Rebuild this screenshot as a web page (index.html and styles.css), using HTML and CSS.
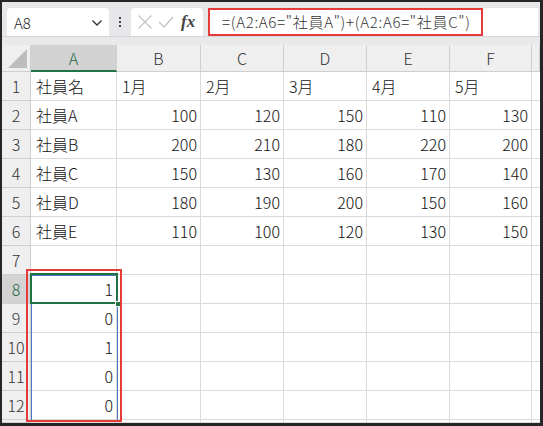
FILE: index.html
```html
<!DOCTYPE html>
<html lang="ja">
<head>
<meta charset="utf-8">
<link rel="stylesheet" href="styles.css">
</head>
<body>
<div class="frame">
  <div class="app">
    <div class="toolbar">
      <div class="namebox">
        <span class="ref">A8</span>
        <svg class="chev" width="12" height="8" viewBox="0 0 12 8"><polyline points="1.5,1.5 6,6 10.5,1.5" fill="none" stroke="#333" stroke-width="1.4"/></svg>
      </div>
      <div class="vdots"><i></i><i></i><i></i></div>
      <div class="fxbox">
        <svg width="16" height="16" viewBox="0 0 16 16"><path d="M1.5 1.5 L14.5 14.5 M14.5 1.5 L1.5 14.5" stroke="#c4c4c4" stroke-width="1.3" fill="none"/></svg>
        <svg width="18" height="16" viewBox="0 0 18 16"><polyline points="2,8 7,13 16,3" stroke="#c4c4c4" stroke-width="1.3" fill="none"/></svg>
        <span class="fx">fx</span>
      </div>
      <div class="formula">=(A2:A6="社員A")+(A2:A6="社員C")</div>
      <div class="mark mark-formula"></div>
    </div>
    <div class="sep"></div>
    <div class="sheet">
      <div class="hd corner"><span class="tri"></span></div>
      <div class="hd col sel">A</div>
      <div class="hd col">B</div>
      <div class="hd col">C</div>
      <div class="hd col">D</div>
      <div class="hd col">E</div>
      <div class="hd col">F</div>
      <div class="hd col"></div>

      <div class="hd row">1</div><div class="c">社員名</div><div class="c">1月</div><div class="c">2月</div><div class="c">3月</div><div class="c">4月</div><div class="c">5月</div><div class="c"></div>
      <div class="hd row">2</div><div class="c">社員A</div><div class="c n">100</div><div class="c n">120</div><div class="c n">150</div><div class="c n">110</div><div class="c n">130</div><div class="c"></div>
      <div class="hd row">3</div><div class="c">社員B</div><div class="c n">200</div><div class="c n">210</div><div class="c n">180</div><div class="c n">220</div><div class="c n">200</div><div class="c"></div>
      <div class="hd row">4</div><div class="c">社員C</div><div class="c n">150</div><div class="c n">130</div><div class="c n">160</div><div class="c n">170</div><div class="c n">140</div><div class="c"></div>
      <div class="hd row">5</div><div class="c">社員D</div><div class="c n">180</div><div class="c n">190</div><div class="c n">200</div><div class="c n">150</div><div class="c n">160</div><div class="c"></div>
      <div class="hd row">6</div><div class="c">社員E</div><div class="c n">110</div><div class="c n">100</div><div class="c n">120</div><div class="c n">130</div><div class="c n">150</div><div class="c"></div>
      <div class="hd row">7</div><div class="c"></div><div class="c"></div><div class="c"></div><div class="c"></div><div class="c"></div><div class="c"></div><div class="c"></div>
      <div class="hd row sel">8</div><div class="c n">1</div><div class="c"></div><div class="c"></div><div class="c"></div><div class="c"></div><div class="c"></div><div class="c"></div>
      <div class="hd row">9</div><div class="c n">0</div><div class="c"></div><div class="c"></div><div class="c"></div><div class="c"></div><div class="c"></div><div class="c"></div>
      <div class="hd row">10</div><div class="c n">1</div><div class="c"></div><div class="c"></div><div class="c"></div><div class="c"></div><div class="c"></div><div class="c"></div>
      <div class="hd row">11</div><div class="c n">0</div><div class="c"></div><div class="c"></div><div class="c"></div><div class="c"></div><div class="c"></div><div class="c"></div>
      <div class="hd row">12</div><div class="c n">0</div><div class="c"></div><div class="c"></div><div class="c"></div><div class="c"></div><div class="c"></div><div class="c"></div>
      <div class="hd row"></div><div class="c"></div><div class="c"></div><div class="c"></div><div class="c"></div><div class="c"></div><div class="c"></div><div class="c"></div>

      <div class="spill"></div>
      <div class="active"><span class="handle"></span></div>
      <div class="mark mark-range"></div>
    </div>
  </div>
</div>
</body>
</html>
```

FILE: styles.css
```css
* { box-sizing: border-box; }
html, body { margin: 0; padding: 0; }
body {
  width: 543px;
  height: 426px;
  overflow: hidden;
  font-family: "Noto Sans CJK JP", "Noto Sans", sans-serif;
  font-weight: 300;
}
.frame {
  width: 543px;
  height: 426px;
  background: #262626;
  padding: 2px 3px 3px 2px;
}
.app {
  width: 538px;
  height: 421px;
  background: #ffffff;
  overflow: hidden;
  display: flex;
  flex-direction: column;
}
.toolbar {
  position: relative;
  height: 34px;
  flex: none;
  background: #e7e7ea;
  display: flex;
  align-items: flex-end;
  padding-left: 5px;
}
.namebox {
  width: 102px;
  height: 28px;
  background: #fff;
  border-radius: 4px 4px 0 0;
  display: flex;
  align-items: center;
  justify-content: space-between;
  padding: 0 6px 0 7px;
  font-size: 15px;
  color: #222;
}
.chev { margin-top: 1px; }
.vdots {
  width: 22px;
  height: 28px;
  display: flex;
  flex-direction: column;
  align-items: center;
  justify-content: center;
  gap: 2px;
}
.vdots i {
  display: block;
  width: 2px;
  height: 2px;
  background: #444;
}
.fxbox {
  width: 72px;
  height: 28px;
  background: #fff;
  border-radius: 4px 4px 0 0;
  display: flex;
  align-items: center;
  padding-left: 6px;
  gap: 4px;
}
.fx {
  font-family: "Liberation Serif", "DejaVu Serif", serif;
  font-style: italic;
  font-weight: 700;
  font-size: 17px;
  color: #444;
  margin-left: 2px;
}
.formula {
  margin-left: 5px;
  width: 330px;
  height: 28px;
  background: #fff;
  padding-left: 14px;
  font-size: 15px;
  letter-spacing: 0.7px;
  line-height: 28px;
  color: #333;
  white-space: nowrap;
}
.sep {
  height: 9px;
  flex: none;
  background: #e9e9ec;
  border-top: 1px solid #d6d6da;
}
.sheet {
  position: relative;
  display: grid;
  grid-template-columns: 29px 86px 84px 83px 83px 83px 82px 8px;
  grid-template-rows: 27px repeat(12, 29px) 3px;
  font-size: 16px;
  color: #111;
}
.hd {
  background: #efefef;
  border-right: 1px solid #cfcfcf;
  border-bottom: 1px solid #cfcfcf;
  display: flex;
  align-items: center;
  justify-content: center;
  color: #333;
  font-size: 16px;
}
.hd.sel {
  background: #d3d3d3;
  color: #1d6b41;
}
.hd.col.sel {
  border-bottom: 2px solid #217346;
}
.corner { position: relative; }
.tri {
  position: absolute;
  right: 3px;
  bottom: 3px;
  width: 0;
  height: 0;
  border-left: 19px solid transparent;
  border-bottom: 19px solid #bdbdbd;
}
.c {
  border-right: 1px solid #dadada;
  border-bottom: 1px solid #dadada;
  display: flex;
  align-items: center;
  padding: 0 4px 0 5px;
  white-space: nowrap;
  overflow: hidden;
}
.c.n { justify-content: flex-end; padding-right: 3px; }
.spill {
  position: absolute;
  left: 29px;
  top: 230px;
  width: 87px;
  height: 146px;
  border: 1px solid #4a78c2;
  pointer-events: none;
}
.active {
  position: absolute;
  left: 28px;
  top: 228px;
  width: 88px;
  height: 31px;
  border: 2px solid #217346;
}
.handle {
  position: absolute;
  right: -5px;
  bottom: -5px;
  width: 6px;
  height: 6px;
  background: #217346;
  border: 1px solid #fff;
}
.mark {
  position: absolute;
  border: 2px solid #e53b3b;
  pointer-events: none;
}
.mark-formula {
  left: 206px;
  top: 6px;
  width: 275px;
  height: 28px;
}
.mark-range {
  left: 24px;
  top: 224px;
  width: 96px;
  height: 153px;
}
```
